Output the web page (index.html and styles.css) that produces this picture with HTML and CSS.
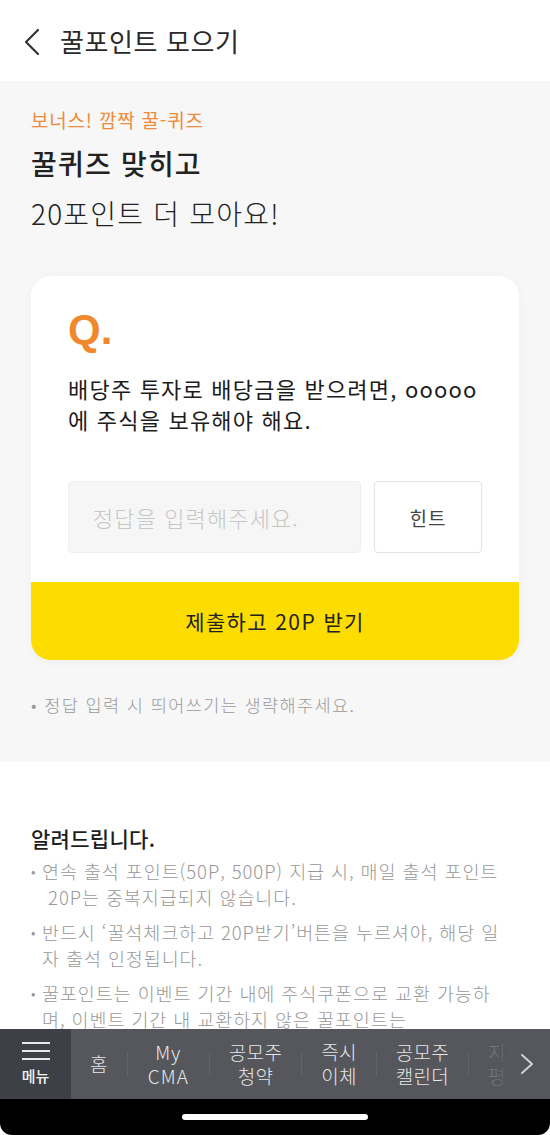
FILE: index.html
```html
<!DOCTYPE html>
<html lang="ko">
<head>
<meta charset="utf-8">
<title>꿀포인트 모으기</title>
<link rel="stylesheet" href="styles.css">
</head>
<body>
<div class="screen">
  <header class="topbar">
    <svg class="back" width="18" height="28" viewBox="0 0 18 28"><path d="M15 2 L3 14 L15 26" fill="none" stroke="#333" stroke-width="2.2" stroke-linecap="round" stroke-linejoin="round"/></svg>
    <h1 class="title">꿀포인트 모으기</h1>
  </header>

  <main class="content">
    <section class="quiz">
      <p class="eyebrow">보너스! 깜짝 꿀-퀴즈</p>
      <h2 class="headline"><span class="strong">꿀퀴즈 맞히고</span><br>20포인트 더 모아요!</h2>

      <div class="card">
        <div class="card-body">
          <div class="q">Q.</div>
          <p class="question">배당주 투자로 배당금을 받으려면, ooooo<br>에 주식을 보유해야 해요.</p>
          <div class="answer-row">
            <div class="answer">정답을 입력해주세요.</div>
            <div class="hint">힌트</div>
          </div>
        </div>
        <div class="submit">제출하고 20P 받기</div>
      </div>

      <p class="note">• 정답 입력 시 띄어쓰기는 생략해주세요.</p>
    </section>

    <section class="notice">
      <h3 class="notice-title">알려드립니다.</h3>
      <ul class="bullets">
        <li>연속 출석 포인트(50P, 500P) 지급 시, 매일 출석 포인트<br>&nbsp;20P는 중복지급되지 않습니다.</li>
        <li>반드시 ‘꿀석체크하고 20P받기’버튼을 누르셔야, 해당 일<br>자 출석 인정됩니다.</li>
        <li>꿀포인트는 이벤트 기간 내에 주식쿠폰으로 교환 가능하<br>며, 이벤트 기간 내 교환하지 않은 꿀포인트는</li>
      </ul>
    </section>
  </main>

  <nav class="tabbar">
    <div class="menu">
      <span class="burger"><i></i><i></i><i></i></span>
      <span class="menu-label">메뉴</span>
    </div>
    <div class="tabs">
      <span class="tab">홈</span>
      <span class="sep"></span>
      <span class="tab tab-wide">My<br>CMA</span>
      <span class="sep"></span>
      <span class="tab">공모주<br>청약</span>
      <span class="sep"></span>
      <span class="tab">즉시<br>이체</span>
      <span class="sep"></span>
      <span class="tab">공모주<br>캘린더</span>
      <span class="sep"></span>
      <span class="tab">지수<br>평가</span>
    </div>
    <div class="more">
      <svg width="14" height="22" viewBox="0 0 14 22"><path d="M2 2 L12 11 L2 20" fill="none" stroke="#d0d1d3" stroke-width="2" stroke-linecap="round" stroke-linejoin="round"/></svg>
    </div>
  </nav>

  <div class="homebar"><span class="indicator"></span></div>
</div>
</body>
</html>
```

FILE: styles.css
```css
* { box-sizing: border-box; }
html, body { margin: 0; padding: 0; background: #fff; }
body {
  font-family: "Noto Sans CJK KR", "Noto Sans", sans-serif;
  color: #222;
}
.screen {
  width: 550px;
  height: 1135px;
  display: flex;
  flex-direction: column;
  overflow: hidden;
}
.topbar {
  height: 81px;
  flex: none;
  display: flex;
  align-items: center;
  padding: 0 0 0 23px;
  background: #fff;
}
.back { margin-right: 19px; margin-top: 2px; }
.title {
  margin: 0;
  font-size: 26px;
  font-weight: 400;
  color: #2a2a2a;
  letter-spacing: 0.6px;
  line-height: 1;
}

.content {
  flex: 1;
  overflow: hidden;
}
.quiz {
  background: #f7f7f7;
  padding: 26px 31px 45px;
}
.eyebrow {
  margin: 0;
  color: #f08a3c;
  font-size: 19px;
  letter-spacing: 0.8px;
  line-height: 26px;
}
.headline {
  margin: 5px 0 0;
  font-size: 28px;
  letter-spacing: 1.2px;
  font-weight: 300;
  line-height: 50px;
  color: #222;
}
.headline .strong { font-weight: 500; }

.card {
  margin-top: 38px;
  background: #fff;
  border-radius: 20px;
  box-shadow: 0 2px 10px rgba(0,0,0,0.04);
  overflow: hidden;
}
.card-body {
  padding: 30px 37px 29px;
}
.q {
  font-family: "Liberation Sans", Arial, sans-serif;
  font-weight: 700;
  font-size: 42px;
  line-height: 48px;
  color: #f0892e;
}
.question {
  margin: 19px 0 0;
  font-size: 22px;
  letter-spacing: 1.2px;
  font-weight: 400;
  line-height: 31px;
  color: #1c1c1c;
  white-space: nowrap;
}
.answer-row {
  margin-top: 46px;
  display: flex;
  gap: 13px;
}
.answer {
  flex: 1;
  height: 72px;
  background: #f6f6f6;
  border: 1px solid #efefef;
  border-radius: 4px;
  display: flex;
  align-items: center;
  padding-left: 24px;
  font-size: 22px;
  letter-spacing: 1.1px;
  font-weight: 300;
  color: #c6c6c6;
}
.hint {
  width: 108px;
  height: 72px;
  flex: none;
  border: 1.5px solid #e2e2e2;
  border-radius: 4px;
  display: flex;
  align-items: center;
  justify-content: center;
  font-size: 19px;
  letter-spacing: 1px;
  color: #444;
}
.submit {
  height: 78px;
  background: #fddc00;
  display: flex;
  align-items: center;
  justify-content: center;
  font-size: 21px;
  letter-spacing: 1.4px;
  font-weight: 400;
  color: #222;
}
.note {
  margin: 33px 0 0;
  font-size: 17.5px;
  letter-spacing: 1.4px;
  line-height: 24px;
  color: #9a9a9a;
  font-weight: 300;
}

.notice {
  background: #fff;
  padding: 62px 31px 0;
}
.notice-title {
  margin: 0;
  font-size: 21px;
  letter-spacing: 0.3px;
  font-weight: 500;
  line-height: 28px;
  color: #1e1e1e;
}
.bullets {
  list-style: none;
  margin: 6px 0 0;
  padding: 0;
}
.bullets li {
  position: relative;
  padding-left: 11px;
  font-size: 18.5px;
  letter-spacing: 0.9px;
  line-height: 26px;
  color: #989898;
  font-weight: 300;
  margin-bottom: 9px;
  white-space: nowrap;
}
.bullets li::before {
  content: "•";
  position: absolute;
  left: 0;
  top: 0;
  font-size: 14px;
}

.tabbar {
  flex: none;
  height: 70px;
  display: flex;
  background: #55575c;
  position: relative;
}
.menu {
  width: 71px;
  flex: none;
  background: #3e4047;
  display: flex;
  flex-direction: column;
  align-items: center;
  justify-content: center;
  gap: 6px;
}
.burger {
  display: flex;
  flex-direction: column;
  gap: 6px;
}
.burger i {
  display: block;
  width: 28px;
  height: 2px;
  background: #e9e9ea;
}
.menu-label {
  font-size: 15px;
  line-height: 20px;
  color: #f2f2f2;
  font-weight: 500;
}
.tabs {
  flex: 1;
  display: flex;
  align-items: center;
  overflow: hidden;
  white-space: nowrap;
}
.tab {
  padding: 0 19px;
  text-align: center;
  font-size: 19px;
  letter-spacing: 0.3px;
  line-height: 24px;
  color: #e6e6e7;
  font-weight: 300;
}
.tab-wide {
  padding: 0 20px;
  letter-spacing: 1px;
}
.sep {
  width: 1px;
  height: 24px;
  background: #63656a;
  flex: none;
}
.more {
  position: absolute;
  right: 0;
  top: 0;
  bottom: 0;
  width: 78px;
  display: flex;
  align-items: center;
  justify-content: flex-end;
  padding-right: 16px;
  background: linear-gradient(to right, rgba(85,87,92,0.55) 0%, rgba(85,87,92,0.85) 35%, #55575c 55%);
}

.homebar {
  flex: none;
  height: 36px;
  background: #000;
  display: flex;
  justify-content: center;
  padding-top: 15px;
  border-radius: 0 0 12px 12px;
}
.indicator {
  width: 186px;
  height: 6px;
  border-radius: 3px;
  background: #fff;
}
```
